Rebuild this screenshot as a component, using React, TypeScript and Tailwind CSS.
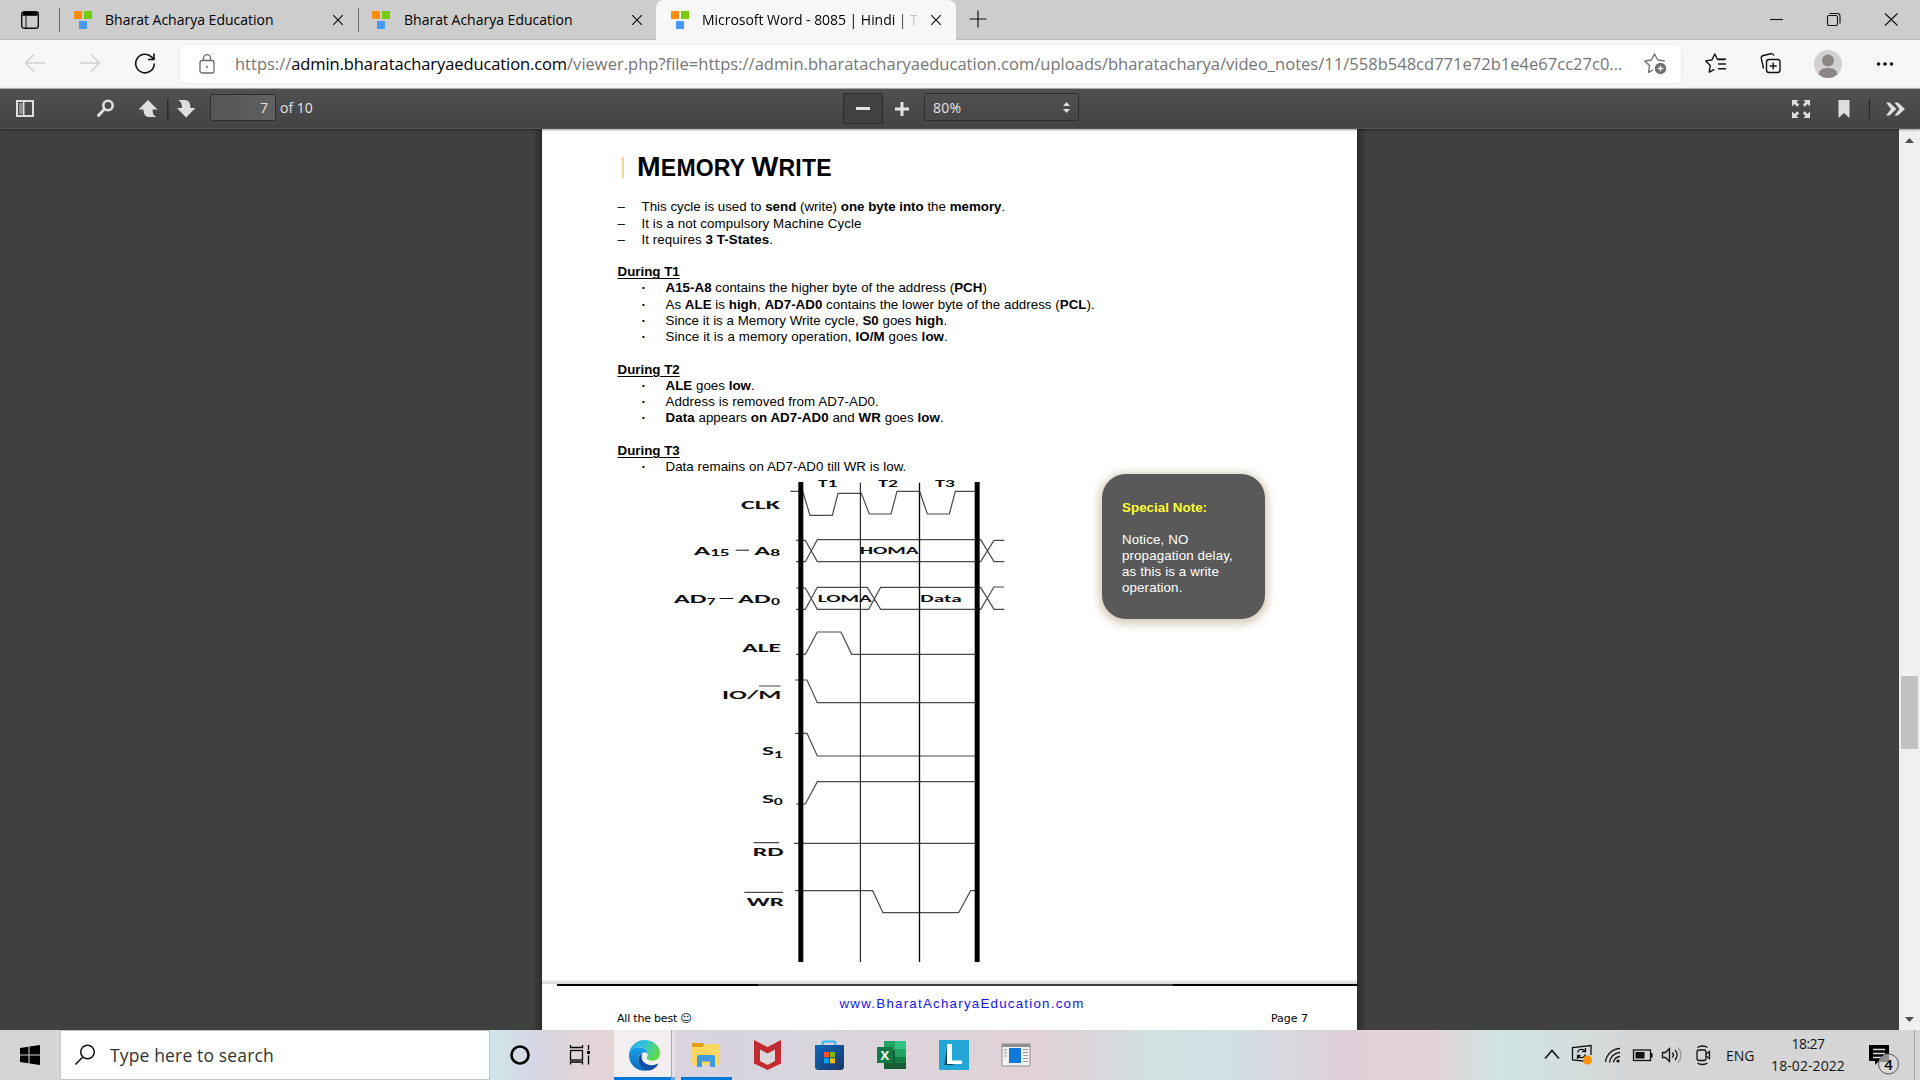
import type { ReactNode } from "react";

function Favicon() {
  return (
    <svg width="18" height="18" viewBox="0 0 18 18" className="shrink-0">
      <rect x="0" y="0" width="8" height="8" fill="#ff8c0a" />
      <rect x="10" y="0" width="8" height="8" fill="#76cc0c" />
      <rect x="5" y="10" width="8" height="8" fill="#4898f8" />
    </svg>
  );
}

function Cross({ size = 10 }: { size?: number }) {
  return (
    <svg width={size} height={size} viewBox="0 0 10 10" className="shrink-0" fill="none" stroke="#111" strokeWidth="1.2">
      <path d="M0 0L10 10M10 0L0 10" />
    </svg>
  );
}

function TabStrip() {
  return (
    <div className="flex h-[40px] items-stretch bg-[#cdcdcd] font-['Open_Sans',sans-serif] text-[14px] text-black shadow-[inset_0_-1px_0_#bdbdbd]">
      <div className="flex w-[59px] items-center pl-[21px]">
        <svg width="18" height="18" viewBox="0 0 18 18" fill="none" stroke="#111" strokeWidth="1.4">
          <rect x="0.7" y="0.7" width="16.6" height="16.6" rx="2.6" />
          <path d="M1.5 1h15v3.8h-15z" fill="#000" stroke="none" />
          <path d="M5 5v12.3" strokeWidth="1" />
        </svg>
      </div>
      <div className="my-[8px] w-px bg-[#6d6d6d]" />
      <div className="flex w-[298px] items-center pl-[14px]">
        <Favicon />
        <span className="mb-[2px] ml-[13px] w-[215px] whitespace-nowrap">Bharat Acharya Education</span>
        <span className="ml-[13px]"><Cross /></span>
      </div>
      <div className="my-[8px] w-px bg-[#6d6d6d]" />
      <div className="flex w-[297px] items-center pl-[13px]">
        <Favicon />
        <span className="mb-[2px] ml-[14px] w-[215px] whitespace-nowrap">Bharat Acharya Education</span>
        <span className="ml-[13px]"><Cross /></span>
      </div>
      <div className="flex w-[300px] items-center rounded-t-[8px] bg-[#f7f7f7] pl-[15px]">
        <Favicon />
        <span className="mb-[2px] ml-[13px] w-[215px] overflow-hidden bg-linear-to-r from-black from-90% to-[#c0c0c0] to-97% bg-clip-text whitespace-nowrap text-transparent tracking-[-0.04px]">
          Microsoft Word - 8085 | Hindi | T
        </span>
        <span className="ml-[14px]"><Cross /></span>
      </div>
      <div className="flex flex-1 items-center pb-[2px] pl-[13px]">
        <svg width="18" height="18" viewBox="0 0 18 18" stroke="#111" strokeWidth="1.2">
          <path d="M9 0.5v17M0.5 9h17" />
        </svg>
      </div>
      <div className="flex w-[150px] items-center">
        <svg width="150" height="40" viewBox="0 0 150 40" fill="none" stroke="#111" strokeWidth="1.1">
          <path d="M0 19.5h13" />
          <rect x="57.5" y="15.5" width="10" height="10" rx="1.5" />
          <path d="M59.5 13.5h8a2.5 2.5 0 0 1 2.5 2.5v7.5" />
          <path d="M115 13.500l12.500 12M127.500 13.500l-12.500 12" />
        </svg>
      </div>
    </div>
  );
}

function AddressBar() {
  return (
    <div className="flex h-[48px] items-center bg-[#f7f7f7] font-['Open_Sans',sans-serif] text-[16.5px]">
      <svg width="180" height="48" viewBox="0 0 180 48" fill="none" stroke="#cfcfcf" strokeWidth="1.4">
        <path d="M45 23H25.500M34 14.500l-8.500 8.500 8.500 8.500" />
        <path d="M80 23h19.500M91 14.500l8.500 8.500-8.500 8.500" />
        <path d="M154.300 23.500a9.300 9.300 0 1 1-2.600-6.400l2 2.100M154 13.500v6h-6" stroke="#111" strokeWidth="1.6" />
      </svg>
      <div className="flex h-[38px] w-[1501px] items-center rounded-[5px] bg-white shadow-[0_0_3px_rgba(0,0,0,0.1)]">
        <svg width="16" height="20" viewBox="0 0 16 20" className="ml-[19px] shrink-0" fill="none" stroke="#6a6a6a" strokeWidth="1.3">
          <rect x="1" y="6.500" width="14" height="12.500" rx="2" />
          <path d="M4.500 6.500V4.200a3.500 3.500 0 0 1 7 0v2.300" />
          <circle cx="8" cy="12.700" r="1" fill="#6a6a6a" stroke="none" />
        </svg>
        <div className="ml-[20px] w-[1392px] whitespace-nowrap text-[#757575]">
          https://<span className="text-black tracking-[-0.1px]">admin.bharatacharyaeducation.com</span>
          <span className="tracking-[0.02px]">/viewer.php?file=https://admin.bharatacharyaeducation.com/uploads/bharatacharya/video_notes/11/558b548cd771e72b1e4e67cc27c0...</span>
        </div>
        <svg width="23" height="22" viewBox="0 0 23 22" className="ml-[17px] shrink-0" fill="none" stroke="#6e6e6e" strokeWidth="1.3" strokeLinejoin="round">
          <path d="M19.500 8.800l.8-.9-6.500-.9L10.500 1 7.400 7l-6.600 1 4.800 4.700-1.100 6.600 4.500-2.300" />
          <circle cx="16.500" cy="15.500" r="5.700" fill="#6e6e6e" stroke="none" />
          <path d="M16.500 12.700v5.600M13.700 15.500h5.600" stroke="#fff" />
        </svg>
      </div>
      <svg width="239" height="48" viewBox="0 0 239 48" fill="none" stroke="#111" strokeWidth="1.4" strokeLinejoin="round">
        <path d="M44 19.500h-7.500L33.800 14l-2.900 6-6.200.9 4.600 4.600-1.100 6.700 5.200-2.900" />
        <path d="M37.500 19.300h7M37.500 24h7M37.500 28.700h7" strokeLinecap="round" />
        <rect x="85.500" y="19.500" width="13.500" height="13" rx="2.500" />
        <path d="M92.200 22.500v7M88.700 26h7" />
        <path d="M82.500 28.500l-2.200-10.200a2.500 2.500 0 0 1 1.900-2.800l7.800-1.800a2.500 2.500 0 0 1 2.800 2" />
        <g stroke="none">
          <circle cx="147" cy="24" r="14" fill="#d3d1cf" />
          <circle cx="147" cy="20.500" r="6" fill="#8b8683" />
          <path d="M137.700 34.500c0-4.500 4.400-6.500 9.300-6.500s9.300 2 9.300 6.500a14 14 0 0 1-18.600 0z" fill="#8b8683" />
          <circle cx="197.500" cy="24" r="1.800" fill="#111" />
          <circle cx="204" cy="24" r="1.800" fill="#111" />
          <circle cx="210.500" cy="24" r="1.800" fill="#111" />
        </g>
      </svg>
    </div>
  );
}

function ViewerToolbar() {
  return (
    <div className="flex h-[41px] items-start border-t border-[#a8a8a8] bg-linear-to-b from-[#505050] to-[#434343] font-['Open_Sans',sans-serif] text-[14px] text-[#e4e4e4] shadow-[0_1px_2px_rgba(0,0,0,0.4),inset_0_-1px_0_#555]">
      <svg width="210" height="40" viewBox="0 0 210 40" fill="#dedede">
        <path fillRule="evenodd" d="M16 11h18v17H16zM18 13v13h14V13z" />
        <path d="M19 14h4v11h-4z" fill="#8e8e8e" />
        <path d="M23 13h1.500v13H23z" />
        <circle cx="108" cy="16.500" r="4.700" fill="none" stroke="#dedede" strokeWidth="2.600" />
        <path d="M104.500 20L98.500 26.500" stroke="#dedede" strokeWidth="3" strokeLinecap="round" />
        <path d="M148 11l9.500 9.500H152.500c0 4 1 6 4 7.500h-7c-4 0-6-2.500-6-7.500h-5z" />
        <path d="M167 10h1.500v20H167z" fill="#2a2a2a" />
        <path d="M186 28.500l9.500-9.500H190.500c0-5-1.500-8-6-8h-6.500c3 1.500 4 4 4 8h-5z" />
      </svg>
      <div className="mt-[5px] flex h-[27px] w-[66px] items-center justify-end rounded-[2px] border border-[#2e2e2e] bg-linear-to-r from-[#555] to-[#606060] pr-[7px] pb-px">7</div>
      <span className="mt-[8px] ml-[4px]">of 10</span>
      <div className="flex flex-1 items-start justify-center pr-[13px]">
        <div className="mt-[4px] flex h-[31px] w-[40px] items-center justify-center rounded-l-[2px] border border-[#2b2b2b] bg-[#414141]">
          <div className="h-[3px] w-[14px] bg-[#e4e4e4]" />
        </div>
        <svg width="41" height="40" viewBox="0 0 41 40" fill="#e4e4e4">
          <path d="M12 18.500h5.500V13h3v5.500H26v3h-5.500V27h-3v-5.500H12z" />
        </svg>
        <div className="mt-[4px] flex h-[28px] w-[155px] items-center justify-between rounded-[2px] border border-[#2e2e2e] bg-linear-to-b from-[#4f4f4f] to-[#474747] pr-[8px] pl-[8px]">
          <span className="tracking-[0.3px]">80%</span>
          <svg width="7" height="11" viewBox="0 0 7 11" fill="#dedede">
            <path d="M3.500 0L7 4H0zM3.500 11L0 7h7z" />
          </svg>
        </div>
      </div>
      <svg width="140" height="40" viewBox="0 0 140 40" fill="#dedede" className="ml-[158px]">
        <path d="M12 11h6.500l-2 2 2.700 2.700-2 2-2.700-2.700-2.500 2.500zM30 11v6.500l-2.500-2.500-2.700 2.700-2-2 2.700-2.700-2-2zM12 29v-6.500l2.500 2.500 2.700-2.700 2 2-2.700 2.700 2 2zM30 29h-6.500l2-2-2.700-2.700 2-2 2.700 2.700 2.500-2.500z" />
        <path d="M58.500 11h11v18l-5.500-5-5.500 5z" />
        <path d="M89 10h1v20h-1z" fill="#242424" />
        <path d="M106 13.500h3.500l7 6.500-7 6.500H106l5-6.500zM114.500 13.500h3.500l7 6.500-7 6.500h-3.500l5-6.500z" />
      </svg>
    </div>
  );
}

function Dash({ children }: { children: ReactNode }) {
  return (
    <li className="flex">
      <span className="w-[24px]">–</span>
      <span>{children}</span>
    </li>
  );
}

function Dot({ children }: { children: ReactNode }) {
  return (
    <li className="flex pl-[24px]">
      <span className="w-[24px] font-bold">·</span>
      <span className="tracking-[0.025px]">{children}</span>
    </li>
  );
}

function Stage({ title, children }: { title: string; children: ReactNode }) {
  return (
    <section className="mt-[16.23px]">
      <h2 className="font-bold underline decoration-1 underline-offset-[1.5px]">{title}</h2>
      <ul>{children}</ul>
    </section>
  );
}

function TimingDiagram() {
  return (
    <svg width="360" height="486" viewBox="0 54 1080 1458" className="mt-[3px] shrink-0">
      <g fill="none" stroke="#4a4a4a" strokeWidth="3.600">
        <path d="M391 94H428L450 166H517L534 100H604L628 162H693L711 94H779L802 162H868L886 94H945" />
        <path d="M408 241H436L472 305H962L1002 241H1033M408 305H436L472 239H962L1002 305H1033" />
        <path d="M408 384H436L472 448H626L662 382H962L1002 448H1033M408 448H436L472 382H622L662 448H962L1002 381H1033" />
        <path d="M408 583H436L472 516H543L575 583H945" />
        <path d="M405 660H441L472 728H945" />
        <path d="M405 820H441L472 888H945" />
        <path d="M408 1032H436L472 965H945" />
        <path d="M402 1150H945" />
        <path d="M405 1292H638L669 1358H896L932 1292H945" />
        <path d="M297 678H362M281 1148H357M253 1297H369" />
      </g>
      <g fill="#000">
        <path d="M415 66h15v1440h-15zM944 66h15v1440h-15z" />
        <path d="M599.500 68h3v1438h-3zM776.500 68h4v1438h-4z" />
      </g>
      <g className="font-['Carlito','Lato',sans-serif] font-bold" fill="#111" fontSize="37">
        <text x="243" y="147" textLength="117" lengthAdjust="spacingAndGlyphs">CLK</text>
        <text x="101" y="284" textLength="50" lengthAdjust="spacingAndGlyphs">A</text>
        <text x="150" y="288" fontSize="29" textLength="59" lengthAdjust="spacingAndGlyphs">15</text>
        <path d="M227 269h40v3h-40z" />
        <text x="283" y="284" textLength="48" lengthAdjust="spacingAndGlyphs">A</text>
        <text x="331" y="288" fontSize="29" textLength="30" lengthAdjust="spacingAndGlyphs">8</text>
        <text x="41" y="429" textLength="99" lengthAdjust="spacingAndGlyphs">AD</text>
        <text x="141" y="435" fontSize="27" textLength="25" lengthAdjust="spacingAndGlyphs">7</text>
        <path d="M179 414h40v3h-40z" />
        <text x="234" y="429" textLength="98" lengthAdjust="spacingAndGlyphs">AD</text>
        <text x="333" y="435" fontSize="27" textLength="27" lengthAdjust="spacingAndGlyphs">0</text>
        <text x="247" y="577" textLength="116" lengthAdjust="spacingAndGlyphs">ALE</text>
        <text x="186" y="718" textLength="178" lengthAdjust="spacingAndGlyphs">IO/M</text>
        <text x="306" y="886" textLength="36" lengthAdjust="spacingAndGlyphs">S</text>
        <text x="341" y="893" fontSize="27" textLength="27" lengthAdjust="spacingAndGlyphs">1</text>
        <text x="306" y="1028" textLength="36" lengthAdjust="spacingAndGlyphs">S</text>
        <text x="341" y="1035" fontSize="27" textLength="27" lengthAdjust="spacingAndGlyphs">0</text>
        <text x="278" y="1188" textLength="93" lengthAdjust="spacingAndGlyphs">RD</text>
        <text x="260" y="1337" textLength="112" lengthAdjust="spacingAndGlyphs">WR</text>
        <g fontSize="32">
          <text x="474" y="82" textLength="58" lengthAdjust="spacingAndGlyphs">T1</text>
          <text x="655" y="82" textLength="59" lengthAdjust="spacingAndGlyphs">T2</text>
          <text x="825" y="82" textLength="60" lengthAdjust="spacingAndGlyphs">T3</text>
          <text x="599" y="282" textLength="177" lengthAdjust="spacingAndGlyphs">HOMA</text>
          <text x="473" y="426" textLength="163" lengthAdjust="spacingAndGlyphs">LOMA</text>
          <text x="781" y="426" textLength="124" lengthAdjust="spacingAndGlyphs">Data</text>
        </g>
      </g>
    </svg>
  );
}

function DocumentPage() {
  return (
    <article className="flex h-[901px] w-[815px] shrink-0 flex-col overflow-hidden bg-white font-['Liberation_Sans',Arial,sans-serif] text-[13.33px] leading-[16.23px] text-black">
      <header className="mt-[22px] ml-[80px] flex h-[32px] items-center">
        <div className="mt-[1px] h-[21px] w-[2px] bg-[#fcd28b]" />
        <h1 className="ml-[13px] text-[28.4px] leading-[32px] font-bold tracking-[0.2px] whitespace-nowrap">
          M<span className="text-[23px]">EMORY </span>W<span className="text-[23px]">RITE</span>
        </h1>
      </header>
      <div className="mt-[16.3px] pl-[75.5px] whitespace-nowrap">
        <ul>
          <Dash>This cycle is used to <b>send</b> (write) <b>one byte into</b> the <b>memory</b>.</Dash>
          <Dash><span className="tracking-[0.08px]">It is a not compulsory Machine Cycle</span></Dash>
          <Dash><span className="tracking-[0.08px]">It requires <b>3 T-States</b>.</span></Dash>
        </ul>
        <Stage title="During T1">
          <Dot><b>A15-A8</b> contains the higher byte of the address (<b>PCH</b>)</Dot>
          <Dot>As <b>ALE</b> is <b>high</b>, <b>AD7-AD0</b> contains the lower byte of the address (<b>PCL</b>).</Dot>
          <Dot>Since it is a Memory Write cycle, <b>S0</b> goes <b>high</b>.</Dot>
          <Dot><span className="tracking-[0.1px]">Since it is a memory operation, <b>IO/M</b> goes <b>low</b>.</span></Dot>
        </Stage>
        <Stage title="During T2">
          <Dot><b>ALE</b> goes <b>low</b>.</Dot>
          <Dot><span className="tracking-[0.07px]">Address is removed from AD7-AD0.</span></Dot>
          <Dot><span className="tracking-[0.06px]"><b>Data</b> appears <b>on AD7-AD0</b> and <b>WR</b> goes <b>low</b>.</span></Dot>
        </Stage>
        <Stage title="During T3">
          <Dot><span className="tracking-[0.04px]">Data remains on AD7-AD0 till WR is low.</span></Dot>
        </Stage>
      </div>
      <div className="flex h-[506px] items-start pl-[118px]">
        <TimingDiagram />
        <aside className="mt-[-1px] ml-[82px] h-[145px] w-[163px] rounded-[24px] bg-[#595959] pt-[26px] pl-[20px] leading-[16px] text-white shadow-[0_2px_8px_3px_rgba(165,140,95,0.45)]">
          <p className="font-bold tracking-[0.05px] text-[#ffff33]">Special Note:</p>
          <p className="mt-[16px] tracking-[0.12px]">
            Notice, NO
            <br />
            propagation delay,
            <br />
            as this is a write
            <br />
            operation.
          </p>
        </aside>
      </div>
      <footer className="mt-[-1px] flex flex-col">
        <div className="h-[4px] bg-linear-to-b from-[#f0f0f0] to-[#d4d4d4]" />
        <div className="ml-[15px] flex h-[2px]">
          <div className="w-[201px] bg-black" />
          <div className="w-[415px] bg-[#3c3c3c]" />
          <div className="flex-1 bg-black" />
        </div>
        <p className="mt-[10px] ml-[297.500px] tracking-[1.23px] text-[#1414f0]">www.BharatAcharyaEducation.com</p>
        <div className="mt-[-1px] flex justify-between pr-[49px] pl-[75px] font-['DejaVu_Sans',sans-serif] text-[11px]">
          <span className="tracking-[-0.2px]">All the best ☺</span>
          <span>Page 7</span>
        </div>
      </footer>
    </article>
  );
}

function Viewer() {
  return (
    <main className="flex h-[901px] overflow-hidden bg-[#404040]">
      <div className="w-[542px] shrink-0 bg-linear-to-l from-[#2c2c2c] to-[#404040] to-[9px]" />
      <DocumentPage />
      <div className="flex-1 bg-linear-to-r from-[#2c2c2c] to-[#404040] to-[9px]" />
      <div className="flex w-[21px] flex-col items-center bg-[#f0f0f0]">
        <svg width="21" height="21" viewBox="0 0 21 21" fill="#505050" className="shrink-0">
          <path d="M6 14l4.500-5 4.500 5z" />
        </svg>
        <div className="mt-[526px] h-[73px] w-[17px] shrink-0 bg-[#c1c1c1]" />
        <div className="flex-1" />
        <svg width="21" height="21" viewBox="0 0 21 21" fill="#505050" className="shrink-0">
          <path d="M6 8l4.500 5L15 8z" />
        </svg>
      </div>
    </main>
  );
}

function EdgeIcon() {
  return (
    <svg width="31" height="31" viewBox="0 0 30 30">
      <defs>
        <linearGradient id="edgeTop" x1="0" y1="0" x2="1" y2="0.400">
          <stop offset="0" stopColor="#2aa9e8" />
          <stop offset="0.500" stopColor="#33c2d9" />
          <stop offset="1" stopColor="#5edb4a" />
        </linearGradient>
        <linearGradient id="edgeSide" x1="0" y1="0" x2="0" y2="1">
          <stop offset="0" stopColor="#1ba0e8" />
          <stop offset="1" stopColor="#0669c4" />
        </linearGradient>
      </defs>
      <path d="M0 14C.5 6 7 0 15 0c9 0 15 6 15 12.500 0 5-3.500 7.500-7.500 7.500-3.500 0-5.500-1.200-5.500-2.500 0-1 1.200-1.500 1.200-3.800C18.200 9.500 14 7 9.500 7 5 7 1.500 9.500 0 14z" fill="url(#edgeTop)" />
      <path d="M0 15C0 10 4 7 9 7c5.500 0 9.200 3 9.200 6.500 0 0-2-2-4.200-1.500C10 13 8 17 9.500 21.500 11 26 15 28.500 18 29.700 8 31 0 24 0 15z" fill="url(#edgeSide)" />
      <path d="M13 12.800c-4 2-4.500 6-3.500 9C11 26.500 15 29.500 18.500 29.500c4 0 7.500-2.500 9.300-5.600.3-.6-.2-1-.8-.7C19.500 27 12.500 22 12.200 17c-.1-1.700.2-3.200.8-4.200z" fill="#0d4fa0" />
    </svg>
  );
}

function TaskbarApps() {
  return (
    <div className="flex h-[50px] items-stretch">
      <div className="flex w-[57px] items-center justify-center border-b-[3px] border-[#0078d7] bg-[#f3eeef]">
        <div className="pt-[3px] pl-[3px]"><EdgeIcon /></div>
      </div>
      <div className="mr-[6px] w-[4px] border-b-[3px] border-l border-b-[#62a9e4] border-l-[#a9a6a8] bg-[#e6e1e6]" />
      <div className="flex w-[51px] justify-center border-b-[3px] border-[#0078d7] pt-[13px]">
        <svg width="28" height="24" viewBox="0 0 28 24" className="mr-[2px]">
          <path d="M0 0h11l2 2.500L11 5H0z" fill="#e0a010" />
          <path d="M0 4h10l3-3h15v21H0z" fill="#ffd660" />
          <path d="M5 24V14a2 2 0 0 1 2-2h14a2 2 0 0 1 2 2v10h-5v-5.500h-8V24z" fill="#3f9ae0" />
        </svg>
      </div>
      <svg width="300" height="50" viewBox="0 0 300 50">
        <defs>
          <linearGradient id="store" x1="0" y1="0" x2="1" y2="1">
            <stop offset="0" stopColor="#0a6abf" />
            <stop offset="1" stopColor="#1d3565" />
          </linearGradient>
        </defs>
        <path d="M22 10l13.500 7L49 10v23.500L35.500 40 22 33.500z" fill="#c22b30" />
        <path d="M28 19.500l7.500 4 7.500-4V31l-7.500 4-7.500-4z" fill="#ddd6dd" />
        <path d="M90.500 16v-2.500a2 2 0 0 1 2-2h9a2 2 0 0 1 2 2V16" fill="none" stroke="#35b6f2" strokeWidth="2.200" />
        <path d="M83 15h29v21.500a3.500 3.500 0 0 1-3.500 3.500h-22a3.500 3.500 0 0 1-3.500-3.500z" fill="url(#store)" />
        <path d="M92 22h5v5.300h-5z" fill="#f25022" />
        <path d="M98 22h5v5.300h-5z" fill="#7fba00" />
        <path d="M92 28.300h5v5h-5z" fill="#00a4ef" />
        <path d="M98 28.300h5v5h-5z" fill="#ffb900" />
        <path d="M152 11h11v10h-11z" fill="#21a366" />
        <path d="M163 11h11v8h-11z" fill="#33c481" />
        <path d="M163 19h11v8h-11z" fill="#21a366" />
        <path d="M152 20h11v18h-11z" fill="#185c37" />
        <path d="M163 27h11v6h-11z" fill="#107c41" />
        <path d="M152 33h22v6h-22z" fill="#185c37" />
        <path d="M145 17h16v16h-16z" fill="#107c41" />
        <text x="148.500" y="29.500" fontSize="13" fontWeight="700" fill="#fff" className="font-['Open_Sans',sans-serif]">X</text>
        <path d="M207 10h30v30h-30z" fill="#22a7d6" />
        <path d="M215.500 14l-3 21h10l-7-3z" fill="#0c3c5c" />
        <path d="M215 14h5v16.500h10V34h-15z" fill="#fff" />
        <path d="M270 14h28v22h-28z" fill="#f2f2f2" stroke="#8f8f8f" />
        <path d="M270 14h28v3h-28z" fill="#8f8f8f" />
        <path d="M277 18h12v15h-12z" fill="#0f78d8" />
        <path d="M272 20h3M272 23h3M272 26h3M291 19.500h5M291 22.500h5M291 25.500h5M291 28.500h5M291 31.500h5" stroke="#9a9a9a" />
      </svg>
    </div>
  );
}

function Tray() {
  return (
    <div className="flex h-[50px] items-center font-['Open_Sans',sans-serif] text-[14px] text-[#141414]">
      <svg width="180" height="50" viewBox="1540 0 180 50" fill="none" stroke="#111" strokeWidth="1.300">
        <path d="M1545 28.500l7-8 7 8" strokeWidth="1.600" />
        <path d="M1588 31.500l-15.500-1.500V17.500l18.500-2V25" />
        <path d="M1577.500 22.500a4.300 4.300 0 0 1 7.500-1.500M1585.500 18v3.500h-3.500M1585.500 24.500a4.300 4.300 0 0 1-7.500 1.500M1577.500 29v-3.500h3" />
        <circle cx="1587.500" cy="30" r="4.500" fill="#ff9500" stroke="none" />
        <path d="M1605.500 32a15 15 0 0 1 14.500-13.500M1609.500 32.500a11 11 0 0 1 10.500-10M1613.500 32.500a6.500 6.500 0 0 1 6.500-6" />
        <circle cx="1618" cy="31" r="1.600" fill="#111" stroke="none" />
        <rect x="1633.500" y="20" width="17" height="10.500" />
        <path d="M1635.500 22h9v6.500h-9zM1651 23h1.500v4.500h-1.500z" fill="#111" stroke="none" />
        <path d="M1662.500 22.500h3l4-4v13l-4-4h-3zM1672.500 22.500a4 4 0 0 1 0 5M1675 20a7 7 0 0 1 0 10" />
        <path d="M1678 17.500a11 11 0 0 1 0 15" stroke="#999" />
        <rect x="1697" y="20" width="9" height="10.500" rx="2" />
        <path d="M1706 24l3.500-2.500v7L1706 26M1697.500 17.500c2.500-2 7.500-2 10 0M1697.500 33c2.500 2 7.500 2 10 0" />
      </svg>
      <span className="ml-[6px] w-[35px]">ENG</span>
      <div className="flex w-[94px] flex-col items-center leading-[22px]">
        <span className="tracking-[-0.500px]">18:27</span>
        <span className="tracking-[0.080px]">18-02-2022</span>
      </div>
      <svg width="65" height="50" viewBox="1855 0 65 50">
        <path d="M1869 15h20v16h-10l-4 4v-4h-6z" fill="#000" />
        <path d="M1873 19.500h12M1873 23.500h12M1873 27.500h8" stroke="#ddd" strokeWidth="1.300" />
        <circle cx="1888.500" cy="34" r="10" fill="#d8d8d8" stroke="#555" />
        <path d="M1879 32a10 10 0 0 1 10-8v8z" fill="#8e8e8e" />
        <text x="1888.500" y="39.500" textAnchor="middle" fontSize="15" fontWeight="600" className="font-['Open_Sans',sans-serif]">4</text>
        <path d="M1914.500 0v50" stroke="#a8a8a8" />
      </svg>
    </div>
  );
}

function Taskbar() {
  return (
    <div className="flex h-[50px] items-center bg-[linear-gradient(90deg,#d5d5d5_0,#d5d5d5_60px,#cfe6ea_490px,#d6d6e4_535px,#e6d4d6_600px,#d8d4e0_700px,#dad6dc_850px,#e2d1d8_1040px,#dbd6da_1090px,#d0e2e2_1160px,#d0e0e4_1230px,#e0d0da_1340px,#e4d2d5_1430px,#cfe4e3_1500px,#d3dede_1560px,#d5d5d5_1640px)]">
      <svg width="60" height="50" viewBox="0 0 60 50">
        <path d="M20 18l8.500-1.300v7.800H20zM29.500 16.500L40 15v9.500H29.500zM20 25.500h8.500v7.800L20 32zM29.500 25.500H40V35l-10.500-1.500z" />
      </svg>
      <div className="flex h-[50px] w-[430px] items-center border border-[#c4c4c4] bg-white">
        <svg width="22" height="22" viewBox="0 0 22 22" className="ml-[13px]" fill="none" stroke="#111" strokeWidth="1.500">
          <circle cx="13.500" cy="8" r="6.800" />
          <path d="M8.700 13L1.500 20.500" />
        </svg>
        <span className="ml-[14px] font-['Open_Sans',sans-serif] text-[17.5px] tracking-[0.15px] text-[#333]">Type here to search</span>
      </div>
      <svg width="124" height="50" viewBox="490 0 124 50" fill="none" stroke="#000">
        <circle cx="520" cy="25" r="8.500" strokeWidth="2.600" />
        <g strokeWidth="1.300">
          <rect x="570.500" y="20.500" width="12" height="9.500" />
          <path d="M570.500 15v2.500h12V15M570.500 34.500V32h12v2.500M588.500 15v5M588.500 25.500V34.500" />
          <path d="M587 21h3v3h-3z" fill="#000" stroke="none" />
        </g>
      </svg>
      <TaskbarApps />
      <div className="flex-1" />
      <Tray />
    </div>
  );
}

export default function App() {
  return (
    <div className="flex h-[1080px] w-[1920px] flex-col overflow-hidden">
      <TabStrip />
      <AddressBar />
      <div className="relative z-10"><ViewerToolbar /></div>
      <Viewer />
      <Taskbar />
    </div>
  );
}
